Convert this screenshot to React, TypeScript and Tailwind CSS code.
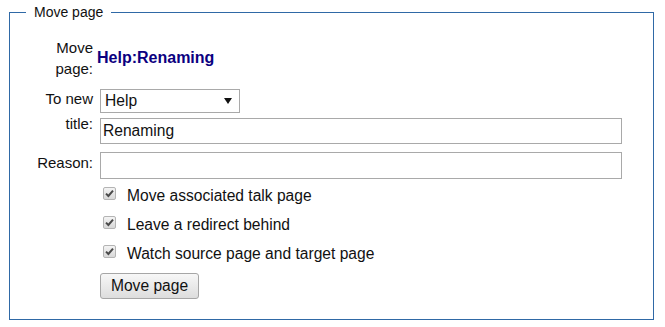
import React from "react";

function Check() {
  return (
    <div className="mt-[6px] ml-[3px] mr-[11px] h-[13px] w-[13px] shrink-0 rounded-[2px] border border-solid border-[#b4b4b4] bg-gradient-to-b from-[#f4f4f4] to-[#d8d8d8] flex items-center justify-center">
      <svg width="9" height="9" viewBox="0 0 9 9">
        <path d="M1 4.6 L3.4 7 L8 1.6" fill="none" stroke="#4a4a4a" strokeWidth="2" />
      </svg>
    </div>
  );
}

export default function App() {
  const rows = ["Move associated talk page", "Leave a redirect behind", "Watch source page and target page"];
  return (
    <div
      className="w-[665px] h-[327px] bg-white pl-[9px] pt-[4px] text-[#111]"
      style={{ fontFamily: '"Liberation Sans", Arial, sans-serif' }}
    >
      <fieldset className="m-0 w-[645px] h-[316px] border border-solid border-[color:#2f69a6] px-[16px] py-0">
        <legend className="px-[8px] text-[14px] leading-[17px]">Move page</legend>
        <div className="mt-[16px] grid grid-cols-[67px_1fr] gap-x-[7px]">
          {/* Row 1 */}
          <div className="text-right text-[15px] leading-[21px]">
            Move
            <br />
            page:
          </div>
          <div className="flex items-center">
            <span className="ml-[-3px] text-[16px] font-bold text-[#0b0080]">Help:Renaming</span>
          </div>

          {/* Row 2 */}
          <div className="mt-[7px] text-right text-[15px] leading-[25px]">
            To new
            <br />
            title:
          </div>
          <div className="mt-[7px] flex flex-col">
            <div className="mt-[3px] flex h-[24px] w-[140px] items-center justify-between border border-solid border-[#a9a9a9] bg-white pl-[4px] pr-[7px] text-[15.6px]">
              <span>Help</span>
              <svg width="8" height="6" viewBox="0 0 8 6">
                <path d="M0 0 H8 L4 6 Z" fill="#111" />
              </svg>
            </div>
            <div className="mt-[5px] flex h-[26px] w-[522px] items-center border border-solid border-[#a9a9a9] bg-white pl-[2px] text-[15.6px]">
              Renaming
            </div>
          </div>

          {/* Row 3 */}
          <div className="mt-[8px] text-right text-[15px] leading-[21px]">Reason:</div>
          <div className="mt-[8px]">
            <div className="h-[27px] w-[522px] border border-solid border-[#a9a9a9] bg-white" />
          </div>

          {/* Checkboxes */}
          <div className="col-start-2 mt-[2px] flex flex-col">
            {rows.map((r) => (
              <div key={r} className="flex h-[29px] items-start">
                <Check />
                <span className="text-[15.6px] leading-[29px]">{r}</span>
              </div>
            ))}
            <div className="mt-[5px] flex h-[26px] w-[99px] items-center justify-center rounded-[3px] border border-solid border-[#a6a6a6] bg-gradient-to-b from-[#f7f7f7] to-[#dddddd] text-[15.6px]">
              Move page
            </div>
          </div>
        </div>
      </fieldset>
    </div>
  );
}
